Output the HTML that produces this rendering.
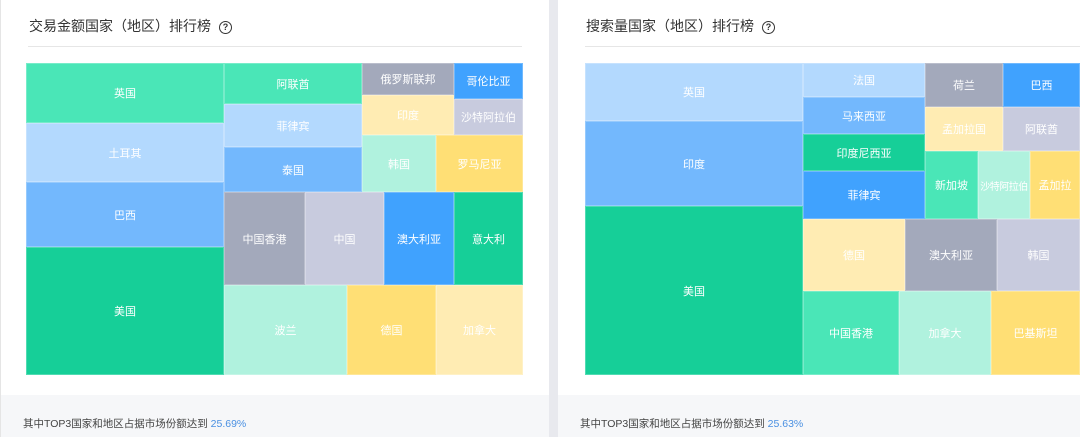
<!DOCTYPE html><html><head><meta charset="utf-8"><style>
body{margin:0;width:1080px;height:437px;overflow:hidden;background:#e8e9ee;font-family:"Liberation Sans","Noto Sans CJK SC",sans-serif;position:relative}
.card{position:absolute;top:0;height:437px;background:#fff}
.foot{position:absolute;left:0;right:0;top:395px;bottom:0;background:#f6f7f9;font-size:10.5px;color:#444}
.foot span{position:absolute;top:21px;left:22px}
.foot b{font-weight:normal;color:#4a90e2}
.title{position:absolute;top:16px;font-size:14px;color:#333}
.q{display:inline-block;width:11px;height:11px;border:1.3px solid #333;border-radius:50%;font-size:9px;line-height:11px;text-align:center;margin-left:8px;vertical-align:1px;font-weight:bold}
.line{position:absolute;top:46px;height:1px;background:#e6e6e6}
.r{position:absolute;display:flex;align-items:center;justify-content:center;color:#fff;font-size:11px;box-sizing:border-box;border:0.5px solid rgba(255,255,255,.25);white-space:nowrap;overflow:hidden}
.a{background:#4ae6b7}.lb{background:#b3d9fe}.b{background:#73b8fd}.g{background:#16cf98}.gr{background:#a3a9bb}.lv{background:#c8cbde}.bb{background:#40a2fe}.m{background:#b0f2de}.y{background:#ffdf75}.ly{background:#ffecb3}
</style></head><body>
<div class="card" style="left:0;width:548px;border-left:1px solid #e5e5e5">
<div class="title" style="left:28px">交易金额国家（地区）排行榜<span class="q">?</span></div>
<div class="line" style="left:27px;width:494px"></div>
<div class="foot"><span>其中TOP3国家和地区占据市场份额达到 <b>25.69%</b></span></div>
</div>
<div class="card" style="left:558px;width:522px">
<div class="title" style="left:28px">搜索量国家（地区）排行榜<span class="q">?</span></div>
<div class="line" style="left:27px;width:495px"></div>
<div class="foot"><span>其中TOP3国家和地区占据市场份额达到 <b>25.63%</b></span></div>
</div>

<div class="r a" style="left:26px;top:63px;width:198px;height:60px">英国</div>
<div class="r lb" style="left:26px;top:123px;width:198px;height:59px">土耳其</div>
<div class="r b" style="left:26px;top:182px;width:198px;height:65px">巴西</div>
<div class="r g" style="left:26px;top:247px;width:198px;height:128px">美国</div>
<div class="r a" style="left:224px;top:63px;width:138px;height:41px">阿联酋</div>
<div class="r lb" style="left:224px;top:104px;width:138px;height:43px">菲律宾</div>
<div class="r b" style="left:224px;top:147px;width:138px;height:45px">泰国</div>
<div class="r gr" style="left:362px;top:63px;width:92px;height:32px">俄罗斯联邦</div>
<div class="r ly" style="left:362px;top:95px;width:92px;height:40px">印度</div>
<div class="r m" style="left:362px;top:135px;width:74px;height:57px">韩国</div>
<div class="r bb" style="left:454px;top:63px;width:69px;height:36px">哥伦比亚</div>
<div class="r lv" style="left:454px;top:99px;width:69px;height:36px">沙特阿拉伯</div>
<div class="r y" style="left:436px;top:135px;width:87px;height:57px">罗马尼亚</div>
<div class="r gr" style="left:224px;top:192px;width:81px;height:93px">中国香港</div>
<div class="r lv" style="left:305px;top:192px;width:79px;height:93px">中国</div>
<div class="r bb" style="left:384px;top:192px;width:70px;height:93px">澳大利亚</div>
<div class="r g" style="left:454px;top:192px;width:69px;height:93px">意大利</div>
<div class="r m" style="left:224px;top:285px;width:123px;height:90px">波兰</div>
<div class="r y" style="left:347px;top:285px;width:89px;height:90px">德国</div>
<div class="r ly" style="left:436px;top:285px;width:87px;height:90px">加拿大</div>

<div class="r lb" style="left:585px;top:63px;width:218px;height:58px">英国</div>
<div class="r b" style="left:585px;top:121px;width:218px;height:85px">印度</div>
<div class="r g" style="left:585px;top:206px;width:218px;height:169px">美国</div>
<div class="r lb" style="left:803px;top:63px;width:122px;height:34px">法国</div>
<div class="r b" style="left:803px;top:97px;width:122px;height:37px">马来西亚</div>
<div class="r g" style="left:803px;top:134px;width:122px;height:37px">印度尼西亚</div>
<div class="r bb" style="left:803px;top:171px;width:122px;height:48px">菲律宾</div>
<div class="r gr" style="left:925px;top:63px;width:78px;height:44px">荷兰</div>
<div class="r bb" style="left:1003px;top:63px;width:77px;height:44px">巴西</div>
<div class="r ly" style="left:925px;top:107px;width:78px;height:44px">孟加拉国</div>
<div class="r lv" style="left:1003px;top:107px;width:77px;height:44px">阿联酋</div>
<div class="r a" style="left:925px;top:151px;width:53px;height:68px">新加坡</div>
<div class="r m" style="left:978px;top:151px;width:52px;height:68px;font-size:10px;letter-spacing:-0.5px">沙特阿拉伯</div>
<div class="r y" style="left:1030px;top:151px;width:50px;height:68px">孟加拉</div>
<div class="r ly" style="left:803px;top:219px;width:102px;height:72px">德国</div>
<div class="r gr" style="left:905px;top:219px;width:92px;height:72px">澳大利亚</div>
<div class="r lv" style="left:997px;top:219px;width:83px;height:72px">韩国</div>
<div class="r a" style="left:803px;top:291px;width:96px;height:84px">中国香港</div>
<div class="r m" style="left:899px;top:291px;width:92px;height:84px">加拿大</div>
<div class="r y" style="left:991px;top:291px;width:89px;height:84px">巴基斯坦</div>
</body></html>
